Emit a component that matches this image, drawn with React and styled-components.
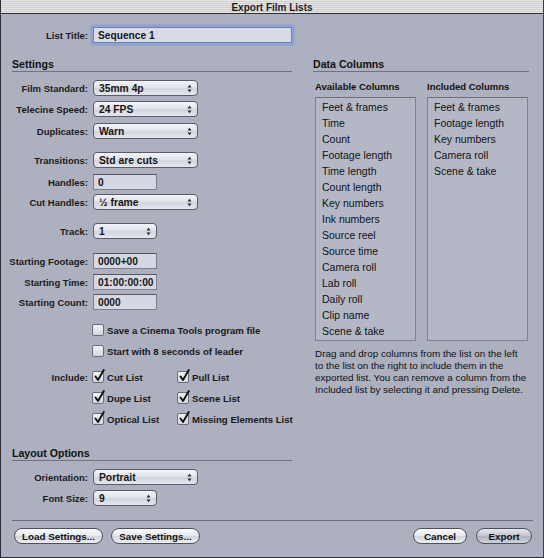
import React from "react";
import styled, { createGlobalStyle } from "styled-components";

const Global = createGlobalStyle`
  html, body { margin: 0; padding: 0; background: #acb0bf; }
  body { font-family: "Liberation Sans", Arial, sans-serif; color: #111; }
`;

const Window = styled.div`
  width: 544px;
  height: 558px;
  box-sizing: border-box;
  background: #acb0bf;
  border-left: 1px solid #2b2d33;
  border-right: 1px solid #3b3d44;
  border-bottom: 1px solid #2b2d33;
  display: flex;
  flex-direction: column;
  overflow: hidden;
`;

const TitleBar = styled.div`
  height: 14px;
  flex-shrink: 0;
  border-bottom: 1px solid #2e2f33;
  background: repeating-linear-gradient(
    to bottom,
    #e4e4e4 0px,
    #e4e4e4 1px,
    #cfcfcf 1px,
    #cfcfcf 2px
  );
  display: flex;
  align-items: center;
  justify-content: center;
  font: bold 10px "Liberation Sans", Arial, sans-serif;
  color: #1c1c1c;
  padding-top: 1px;
  box-sizing: border-box;
`;

const Body = styled.div`
  padding: 13px 11px 0 11px;
  display: flex;
  flex-direction: column;
`;

const Columns = styled.div`
  display: grid;
  grid-template-columns: 280px 216px;
  column-gap: 21px;
  align-items: start;
`;

const Col = styled.div`
  display: flex;
  flex-direction: column;
`;

const SectionHeader = styled.div`
  margin-top: ${(p) => p.$mt ?? 14}px;
  height: 14px;
  line-height: 14px;
  font-size: 10.6px;
  font-weight: bold;
  border-bottom: 1px solid #6f7280;
  box-sizing: content-box;
`;

const Row = styled.div`
  display: flex;
  align-items: center;
  height: 16px;
  margin-top: ${(p) => p.$mt ?? 0}px;
`;

const Label = styled.div`
  width: 76px;
  flex-shrink: 0;
  margin-right: 5px;
  display: flex;
  justify-content: flex-end;
  white-space: nowrap;
  font-size: 9.5px;
  font-weight: bold;
  color: #1a1a1a;
`;

const TextField = styled.div`
  width: ${(p) => p.$w}px;
  height: 16px;
  box-sizing: border-box;
  background: #d5d8e2;
  border: 1px solid #7d808c;
  border-top-color: #55585f;
  display: flex;
  align-items: center;
  padding-left: 4px;
  font-size: 10.2px;
  font-weight: bold;
  color: #151515;
  white-space: nowrap;
  ${(p) =>
    p.$focus &&
    `
    background: #d8dbe6;
    box-shadow: 0 0 0 1px #8fa6dc, 0 0 2px 2px #7f98d6;
    border-color: #6b7fb0;
  `}
`;

const Popup = styled.div`
  position: relative;
  width: ${(p) => p.$w}px;
  height: 16px;
  box-sizing: border-box;
  border: 1px solid #5a5d68;
  border-radius: 4px;
  background: linear-gradient(to bottom, #f3f4f8 0%, #e2e4ec 45%, #d2d5de 55%, #e6e8ef 100%);
  display: flex;
  align-items: center;
  padding-left: 5px;
  font-size: 10.3px;
  font-weight: bold;
  color: #151515;
  white-space: nowrap;
`;

const Arrows = styled.svg`
  position: absolute;
  right: 5px;
  top: 3px;
`;

const CheckRow = styled.div`
  display: flex;
  align-items: center;
`;

const Box = styled.div`
  width: 12px;
  height: 12px;
  box-sizing: border-box;
  border: 1px solid #6a6d78;
  border-radius: 2px;
  background: linear-gradient(to bottom, #f2f3f6 0%, #d4d6de 100%);
  position: relative;
  flex-shrink: 0;
  margin-left: -1px;
  margin-right: 3px;
`;

const Tick = styled.svg`
  position: absolute;
  left: 1px;
  top: -3px;
`;

const CheckText = styled.span`
  font-size: 9.6px;
  font-weight: bold;
  white-space: nowrap;
  color: #1a1a1a;
`;

const IncludeGrid = styled.div`
  display: grid;
  grid-template-columns: 85px auto;
`;

const SubHeader = styled.div`
  margin-top: 9px;
  height: 12px;
  line-height: 12px;
  display: grid;
  grid-template-columns: 112px 102px;
  font-size: 9.5px;
  font-weight: bold;
  padding-left: 2px;
`;

const Lists = styled.div`
  margin-top: 4px;
  display: grid;
  grid-template-columns: 101px 101px;
  column-gap: 11px;
  padding-left: 2px;
`;

const ListBox = styled.div`
  height: 244px;
  box-sizing: border-box;
  border: 1px solid #80838f;
  border-top-color: #6e717c;
  background: #b4b8c6;
  padding: 1px 0 0 6px;
`;

const ListItem = styled.div`
  height: 16px;
  line-height: 16px;
  font-size: 10.5px;
  color: #111;
  white-space: nowrap;
`;

const Help = styled.div`
  margin-top: 7px;
  padding-left: 2px;
  font-size: 9.9px;
  line-height: 12px;
  color: #111;
  white-space: nowrap;
`;

const HelpLine = styled.div``;

const Separator = styled.div`
  margin-top: 14px;
  height: 1px;
  background: #6d707c;
  margin-right: -1px;
`;

const Footer = styled.div`
  margin-top: 7px;
  display: flex;
  align-items: center;
  padding-left: 2px;
`;

const Spacer = styled.div`
  flex: 1;
`;

const PillButton = styled.div`
  width: ${(p) => p.$w}px;
  height: 16px;
  box-sizing: border-box;
  margin-left: ${(p) => p.$ml ?? 0}px;
  border: 1px solid #4d5058;
  border-radius: 8px;
  background: ${(p) =>
    p.$default
      ? "linear-gradient(to bottom, #e4e6ec 0%, #c3c6d0 50%, #aeb2bd 52%, #cfd2da 100%)"
      : "linear-gradient(to bottom, #fafbfd 0%, #e6e8ee 48%, #d3d6de 52%, #eceef3 100%)"};
  display: flex;
  align-items: center;
  justify-content: center;
  font-size: 9.8px;
  font-weight: bold;
  color: #111;
  white-space: nowrap;
`;

const ArrowIcon = () => (
  <Arrows width="5" height="9" viewBox="0 0 5 9">
    <path d="M0.5 3.5 L2.5 0.8 L4.5 3.5 Z" fill="#2a2a2a" />
    <path d="M0.5 5.5 L2.5 8.2 L4.5 5.5 Z" fill="#2a2a2a" />
  </Arrows>
);

const Select = ({ w, children }) => (
  <Popup $w={w}>
    {children}
    <ArrowIcon />
  </Popup>
);

const Check = ({ checked, children }) => (
  <CheckRow>
    <Box>
      {checked && (
        <Tick width="11" height="13" viewBox="0 0 11 13">
          <path
            d="M1.5 7.5 L4 11 L9.8 1"
            fill="none"
            stroke="#111"
            strokeWidth="1.9"
            strokeLinecap="round"
            strokeLinejoin="round"
          />
        </Tick>
      )}
    </Box>
    <CheckText>{children}</CheckText>
  </CheckRow>
);

const available = [
  "Feet & frames",
  "Time",
  "Count",
  "Footage length",
  "Time length",
  "Count length",
  "Key numbers",
  "Ink numbers",
  "Source reel",
  "Source time",
  "Camera roll",
  "Lab roll",
  "Daily roll",
  "Clip name",
  "Scene & take",
];

const included = [
  "Feet & frames",
  "Footage length",
  "Key numbers",
  "Camera roll",
  "Scene & take",
];

const helpLines = [
  "Drag and drop columns from the list on the left",
  "to the list on the right to include them in the",
  "exported list. You can remove a column from the",
  "Included list by selecting it and pressing Delete.",
];

export default function App() {
  return (
    <>
      <Global />
      <Window>
        <TitleBar>Export Film Lists</TitleBar>
        <Body>
          <Row>
            <Label>List Title:</Label>
            <TextField $w={199} $focus>
              Sequence 1
            </TextField>
          </Row>
          <Columns>
            <Col>
              <SectionHeader>Settings</SectionHeader>
              <Row $mt={8}>
                <Label>Film Standard:</Label>
                <Select w={105}>35mm 4p</Select>
              </Row>
              <Row $mt={5}>
                <Label>Telecine Speed:</Label>
                <Select w={105}>24 FPS</Select>
              </Row>
              <Row $mt={6}>
                <Label>Duplicates:</Label>
                <Select w={105}>Warn</Select>
              </Row>
              <Row $mt={13}>
                <Label>Transitions:</Label>
                <Select w={105}>Std are cuts</Select>
              </Row>
              <Row $mt={6}>
                <Label>Handles:</Label>
                <TextField $w={64}>0</TextField>
              </Row>
              <Row $mt={4}>
                <Label>Cut Handles:</Label>
                <Select w={105}>½ frame</Select>
              </Row>
              <Row $mt={13}>
                <Label>Track:</Label>
                <Select w={64}>1</Select>
              </Row>
              <Row $mt={14}>
                <Label>Starting Footage:</Label>
                <TextField $w={64}>0000+00</TextField>
              </Row>
              <Row $mt={5}>
                <Label>Starting Time:</Label>
                <TextField $w={64}>01:00:00:00</TextField>
              </Row>
              <Row $mt={4}>
                <Label>Starting Count:</Label>
                <TextField $w={64}>0000</TextField>
              </Row>
              <Row $mt={12}>
                <Label />
                <Check>Save a Cinema Tools program file</Check>
              </Row>
              <Row $mt={5}>
                <Label />
                <Check>Start with 8 seconds of leader</Check>
              </Row>
              <Row $mt={10}>
                <Label>Include:</Label>
                <IncludeGrid>
                  <Check checked>Cut List</Check>
                  <Check checked>Pull List</Check>
                </IncludeGrid>
              </Row>
              <Row $mt={5}>
                <Label />
                <IncludeGrid>
                  <Check checked>Dupe List</Check>
                  <Check checked>Scene List</Check>
                </IncludeGrid>
              </Row>
              <Row $mt={5}>
                <Label />
                <IncludeGrid>
                  <Check checked>Optical List</Check>
                  <Check checked>Missing Elements List</Check>
                </IncludeGrid>
              </Row>
              <SectionHeader $mt={19}>Layout Options</SectionHeader>
              <Row $mt={8}>
                <Label>Orientation:</Label>
                <Select w={105}>Portrait</Select>
              </Row>
              <Row $mt={5}>
                <Label>Font Size:</Label>
                <Select w={64}>9</Select>
              </Row>
            </Col>
            <Col>
              <SectionHeader>Data Columns</SectionHeader>
              <SubHeader>
                <span>Available Columns</span>
                <span>Included Columns</span>
              </SubHeader>
              <Lists>
                <ListBox>
                  {available.map((c) => (
                    <ListItem key={c}>{c}</ListItem>
                  ))}
                </ListBox>
                <ListBox>
                  {included.map((c) => (
                    <ListItem key={c}>{c}</ListItem>
                  ))}
                </ListBox>
              </Lists>
              <Help>
                {helpLines.map((l) => (
                  <HelpLine key={l}>{l}</HelpLine>
                ))}
              </Help>
            </Col>
          </Columns>
          <Separator />
          <Footer>
            <PillButton $w={89}>Load Settings...</PillButton>
            <PillButton $w={89} $ml={8}>Save Settings...</PillButton>
            <Spacer />
            <PillButton $w={54}>Cancel</PillButton>
            <PillButton $w={56} $ml={9} $default>Export</PillButton>
          </Footer>
        </Body>
      </Window>
    </>
  );
}
